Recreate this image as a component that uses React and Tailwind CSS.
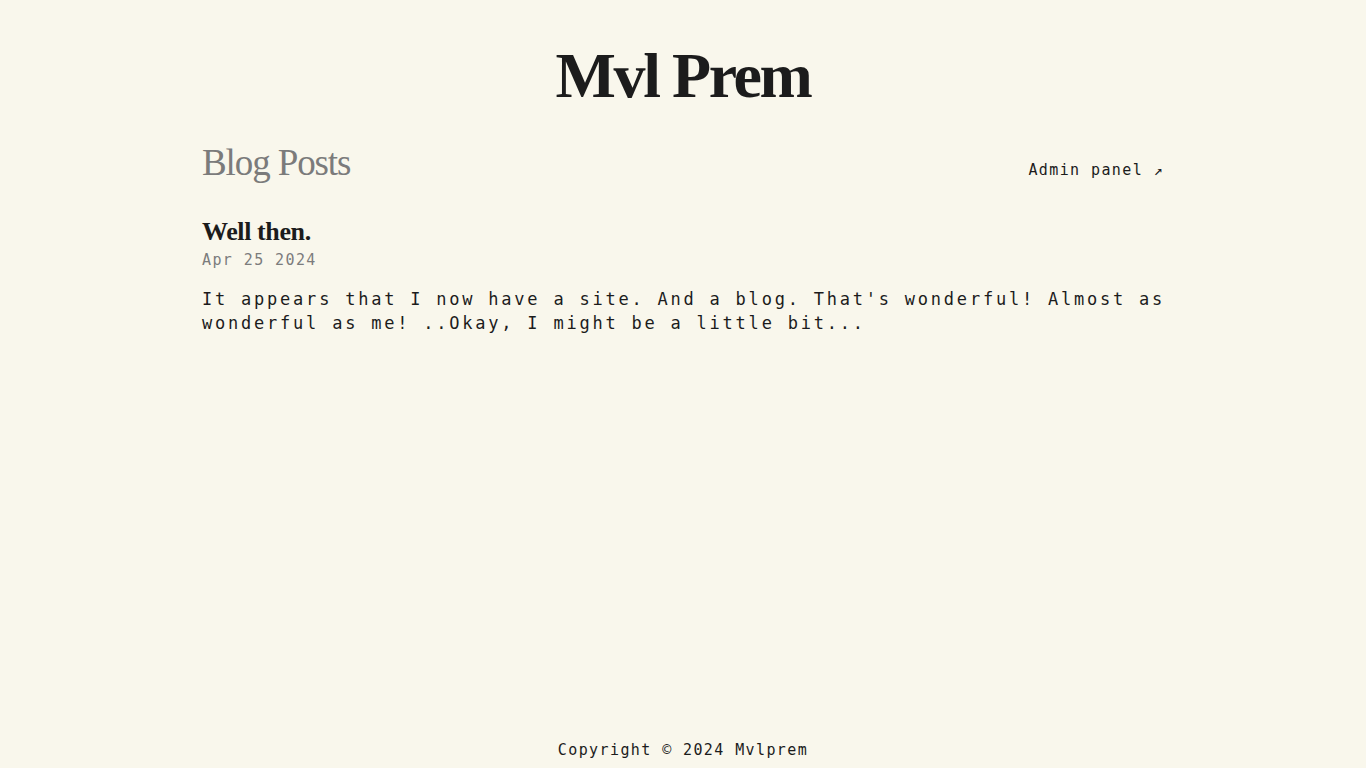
const serif = "font-['Liberation_Serif','DejaVu_Serif',serif]"
const mono = "font-['DejaVu_Sans_Mono','Liberation_Mono',monospace]"

function PostItem({ title, date, excerpt }) {
    return (
        <article className="mt-[32px]">
            <h3 className={`${serif} text-[26px] font-bold leading-[30px] tracking-[-0.015em] text-[#1c1c1c]`}>{title}</h3>
            <p className={`${mono} text-[15px] leading-[20px] tracking-[1.4px] text-[#7c7c7c] mt-[3px]`}>{date}</p>
            <p className={`${mono} text-[17px] leading-[24px] tracking-[2.78px] text-[#1c1c1c] mt-[17px] -mr-[5px]`}>{excerpt}</p>
        </article>
    )
}

export default function App() {
    return (
        <div className="min-h-screen flex flex-col bg-[#f9f7ec] text-[#1c1c1c]">
            <header className="pt-[38px] text-center">
                <h1 className={`${serif} text-[64px] leading-[76px] font-bold tracking-[-0.038em] text-[#1c1c1c]`}>Mvl Prem</h1>
            </header>

            <main className="flex-1 w-full max-w-[962px] mx-auto mt-[27px]">
                <div className="flex items-baseline justify-between">
                    <h2 className={`${serif} text-[37px] leading-[44px] tracking-[-0.03em] text-[#7b7b7b]`}>Blog Posts</h2>
                    <a href="#" className={`${mono} text-[15px] tracking-[1.4px] text-[#1c1c1c]`}>Admin panel ↗</a>
                </div>

                <PostItem
                    title="Well then."
                    date="Apr 25 2024"
                    excerpt="It appears that I now have a site. And a blog. That's wonderful! Almost as wonderful as me! ..Okay, I might be a little bit..."
                />
            </main>

            <footer className={`${mono} text-center text-[15px] leading-[20px] tracking-[1.4px] text-[#1c1c1c] pb-[8px]`}>
                Copyright © 2024 Mvlprem
            </footer>
        </div>
    )
}
